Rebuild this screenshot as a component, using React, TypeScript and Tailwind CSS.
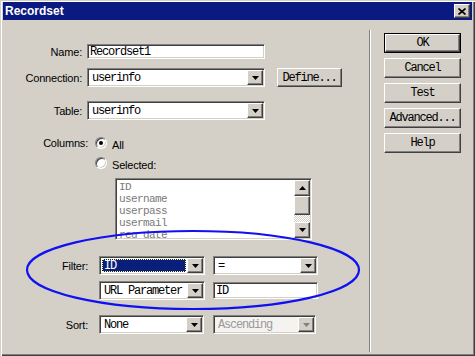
import React from "react";

const mono = "font-['Liberation_Mono','DejaVu_Sans_Mono',monospace] text-[12px] tracking-[-1.2px] leading-[12px]";
const monoSm = "font-['Liberation_Mono','DejaVu_Sans_Mono',monospace] text-[11px] tracking-[-0.6px] leading-[12px]";
const sans = "font-['Liberation_Sans',Arial,sans-serif] text-[11px] tracking-[-0.2px] leading-[12px] text-black";
const sunken =
  "border border-t-[#808080] border-l-[#808080] border-b-white border-r-white shadow-[inset_1px_1px_0_#404040,inset_-1px_-1px_0_#d4d0c8]";
const raised =
  "border border-t-white border-l-white border-b-[#404040] border-r-[#404040] shadow-[inset_-1px_-1px_0_#808080,inset_1px_1px_0_#d4d0c8]";

function Tri({ up, gray }: { up?: boolean; gray?: boolean }) {
  return (
    <svg width="7" height="4" viewBox="0 0 7 4">
      {up ? (
        <polygon points="0,4 7,4 3.5,0" fill={gray ? "#808080" : "#000"} />
      ) : (
        <polygon points="0,0 7,0 3.5,4" fill={gray ? "#808080" : "#000"} />
      )}
    </svg>
  );
}

function ArrowBtn({ gray }: { gray?: boolean }) {
  return (
    <div className={`${raised} bg-[#d4d0c8] w-[16px] h-full flex items-center justify-center`}>
      <Tri gray={gray} />
    </div>
  );
}

function Select({
  className,
  text,
  highlight,
  disabled,
}: {
  className: string;
  text: string;
  highlight?: boolean;
  disabled?: boolean;
}) {
  return (
    <div className={`${sunken} ${className} ${disabled ? "bg-[#f4f3f0]" : "bg-white"} h-[19px] p-[1px] flex`}>
      <div className="flex-1 flex items-center px-[1px] min-w-0">
        {highlight ? (
          <div className={`${mono} bg-[#0a1f7c] text-white h-[13px] flex items-center px-[2px] w-full outline-1 outline-dotted outline-[#ffff80] -outline-offset-1`}>
            {text}
          </div>
        ) : (
          <div className={`${mono} ${disabled ? "text-[#9a9a9a]" : "text-black"} pl-[2px]`}>{text}</div>
        )}
      </div>
      <ArrowBtn gray={disabled} />
    </div>
  );
}

function Input({ className, text }: { className: string; text: string }) {
  return (
    <div className={`${sunken} ${className} bg-white flex items-center`}>
      <div className={`${mono} text-black pl-[2px]`}>{text}</div>
    </div>
  );
}

function Button({ text, def }: { text: string; def?: boolean }) {
  return (
    <div className={`w-[77px] h-[20px] bg-[#d4d0c8] ${def ? "border border-black" : ""} flex`}>
      <div className={`${raised} flex-1 flex items-center justify-center ${mono} text-black`}>{text}</div>
    </div>
  );
}

function Radio({ checked }: { checked?: boolean }) {
  return (
    <div className="w-[12px] h-[12px] rounded-full border border-t-[#808080] border-l-[#808080] border-b-white border-r-white bg-white shadow-[inset_1px_1px_0_#404040,inset_-1px_-1px_0_#d4d0c8] flex items-center justify-center">
      {checked && <div className="w-[4px] h-[4px] rounded-full bg-black" />}
    </div>
  );
}

export default function App() {
  return (
    <div className="relative w-[475px] h-[356px] bg-[#d4d0c8] shadow-[inset_1px_1px_0_#d4d0c8,inset_2px_2px_0_#ffffff,inset_-1px_-1px_0_#404040,inset_-2px_-2px_0_#808080] pt-[2px] px-[3px] pb-[3px] flex flex-col overflow-hidden">
      {/* Title bar */}
      <div className="h-[18px] bg-[#0a1a80] flex items-center justify-between pl-[2px] pr-[2px]">
        <span className="font-['Liberation_Sans',Arial,sans-serif] font-bold text-[12px] text-white leading-none">
          Recordset
        </span>
        <div className={`${raised} bg-[#d4d0c8] w-[16px] h-[14px] flex items-center justify-center`}>
          <svg width="8" height="7" viewBox="0 0 8 7">
            <path d="M0.5 0.5 L7.5 6.5 M7.5 0.5 L0.5 6.5" stroke="#000" strokeWidth="1.6" />
          </svg>
        </div>
      </div>

      {/* Body */}
      <div className="flex-1 flex">
        {/* Left panel */}
        <div className="w-[366px] flex flex-col">
          {/* Name */}
          <div className="flex items-center mt-[24px] h-[15px]">
            <div className={`${sans} w-[79px] text-right`}>Name:</div>
            <Input className="ml-[5px] w-[178px] h-[15px]" text="Recordset1" />
          </div>
          {/* Connection */}
          <div className="flex items-center mt-[9px] h-[19px]">
            <div className={`${sans} w-[79px] text-right`}>Connection:</div>
            <Select className="ml-[5px] w-[178px]" text="userinfo" />
            <div className="ml-[12px] w-[65px] h-[19px]">
              <div className={`${raised} bg-[#d4d0c8] w-full h-full flex items-center justify-center ${mono} text-black`}>
                Define...
              </div>
            </div>
          </div>
          {/* Table */}
          <div className="flex items-center mt-[14px] h-[19px]">
            <div className={`${sans} w-[79px] text-right`}>Table:</div>
            <Select className="ml-[5px] w-[178px]" text="userinfo" />
          </div>
          {/* Columns */}
          <div className="flex items-center mt-[16px] h-[14px]">
            <div className={`${sans} w-[85px] text-right`}>Columns:</div>
            <div className="ml-[7px]">
              <Radio checked />
            </div>
            <div className={`${sans} ml-[5px] mt-[3px]`}>All</div>
          </div>
          <div className="flex items-center mt-[6px] h-[14px]">
            <div className="w-[85px]" />
            <div className="ml-[7px]">
              <Radio />
            </div>
            <div className={`${sans} ml-[5px] mt-[3px]`}>Selected:</div>
          </div>
          {/* List */}
          <div className={`${sunken} bg-white ml-[112px] mt-[8px] w-[197px] h-[62px] p-[1px] flex`}>
            <div className="flex-1 overflow-hidden pl-[2px] pt-[1px]">
              {["ID", "username", "userpass", "usermail", "reg_date"].map((t) => (
                <div key={t} className={`${monoSm} text-[#7a7a7a] h-[12px]`}>
                  {t}
                </div>
              ))}
            </div>
            <div className="w-[16px] flex flex-col">
              <div className={`${raised} bg-[#d4d0c8] h-[16px] flex items-center justify-center`}>
                <Tri up />
              </div>
              <div className={`${raised} bg-[#d4d0c8] h-[19px]`} />
              <div className="flex-1 bg-[repeating-conic-gradient(#ffffff_0_25%,#d4d0c8_0_50%)] bg-[length:2px_2px]" />
              <div className={`${raised} bg-[#d4d0c8] h-[16px] flex items-center justify-center`}>
                <Tri />
              </div>
            </div>
          </div>
          {/* Filter */}
          <div className="flex items-center mt-[16px] h-[19px]">
            <div className={`${sans} w-[85px] text-right`}>Filter:</div>
            <Select className="ml-[11px] w-[106px]" text="ID" highlight />
            <Select className="ml-[8px] w-[105px]" text="=" />
          </div>
          <div className="flex items-center mt-[6px] h-[19px]">
            <div className="w-[85px]" />
            <Select className="ml-[11px] w-[106px]" text="URL Parameter" />
            <Input className="ml-[8px] w-[105px] h-[17px]" text="ID" />
          </div>
          {/* Sort */}
          <div className="flex items-center mt-[15px] h-[19px]">
            <div className={`${sans} w-[85px] text-right`}>Sort:</div>
            <Select className="ml-[11px] w-[105px]" text="None" />
            <Select className="ml-[9px] w-[103px]" text="Ascending" disabled />
          </div>
        </div>

        {/* Divider */}
        <div className="w-[2px] mt-[10px] mb-[1px] border-l border-l-[#808080] border-r border-r-white" />

        {/* Right panel */}
        <div className="ml-[13px] mt-[13px] flex flex-col gap-[5px]">
          <Button text="OK" def />
          <Button text="Cancel" />
          <Button text="Test" />
          <Button text="Advanced..." />
          <Button text="Help" />
        </div>
      </div>

      {/* Annotation ellipse */}
      <svg className="absolute left-0 top-0 pointer-events-none" width="475" height="356" viewBox="0 0 475 356">
        <ellipse cx="193" cy="270" rx="166" ry="39" fill="none" stroke="#1010f0" strokeWidth="2.2" />
      </svg>
    </div>
  );
}
